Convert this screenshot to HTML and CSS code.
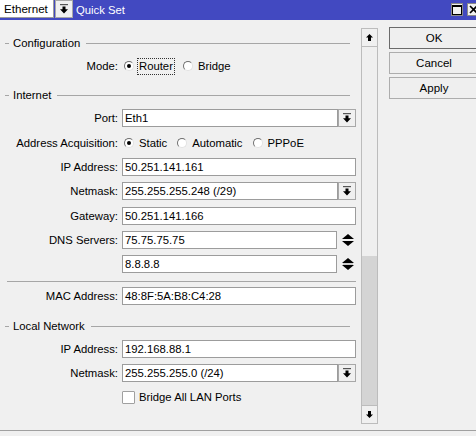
FILE: index.html
```html
<!DOCTYPE html>
<html lang="en">
<head>
    <meta charset="UTF-8">
    <title>Quick Set</title>
    <link rel="stylesheet" href="styles.css">
</head>
<body>
<div class="window">
    <div class="titlebar">
        <div class="iface">Ethernet</div>
        <div class="drop-btn title-drop">
            <svg width="8" height="10" viewBox="0 0 8 10"><rect x="0" y="0" width="8" height="1.2" fill="#555"/><path d="M2.5 2.5 H5.5 V5.2 H8 L4 9.5 L0 5.2 H2.5 Z" fill="#000"/></svg>
        </div>
        <div class="title">Quick Set</div>
        <div class="win-btn max">
            <svg width="10" height="10" viewBox="0 0 10 10"><rect x="0.5" y="0.5" width="9" height="9" fill="none" stroke="#000"/><rect x="0" y="0" width="10" height="2" fill="#000"/></svg>
        </div>
        <div class="win-btn close">
            <svg width="9" height="9" viewBox="0 0 9 9"><path d="M1 1 L8 8 M8 1 L1 8" stroke="#000" stroke-width="1.6"/></svg>
        </div>
    </div>

    <div class="main">
        <div class="form">
            <div class="group">
                <div class="group-head"><span>Configuration</span></div>
                <div class="row">
                    <div class="label">Mode:</div>
                    <div class="options">
                        <div class="option router"><span class="radio checked"></span><span class="focus">Router</span></div>
                        <div class="option"><span class="radio"></span><span>Bridge</span></div>
                    </div>
                </div>
            </div>

            <div class="group">
                <div class="group-head"><span>Internet</span></div>
                <div class="row">
                    <div class="label">Port:</div>
                    <div class="field short">Eth1</div>
                    <div class="drop-btn">
                        <svg width="8" height="10" viewBox="0 0 8 10"><rect x="0" y="0" width="8" height="1.2" fill="#555"/><path d="M2.5 2.5 H5.5 V5.2 H8 L4 9.5 L0 5.2 H2.5 Z" fill="#000"/></svg>
                    </div>
                </div>
                <div class="row tall">
                    <div class="label">Address Acquisition:</div>
                    <div class="options">
                        <div class="option"><span class="radio checked"></span><span>Static</span></div>
                        <div class="option"><span class="radio"></span><span>Automatic</span></div>
                        <div class="option"><span class="radio"></span><span>PPPoE</span></div>
                    </div>
                </div>
                <div class="row">
                    <div class="label">IP Address:</div>
                    <div class="field">50.251.141.161</div>
                </div>
                <div class="row">
                    <div class="label">Netmask:</div>
                    <div class="field short">255.255.255.248 (/29)</div>
                    <div class="drop-btn">
                        <svg width="8" height="10" viewBox="0 0 8 10"><rect x="0" y="0" width="8" height="1.2" fill="#555"/><path d="M2.5 2.5 H5.5 V5.2 H8 L4 9.5 L0 5.2 H2.5 Z" fill="#000"/></svg>
                    </div>
                </div>
                <div class="row tall">
                    <div class="label">Gateway:</div>
                    <div class="field">50.251.141.166</div>
                </div>
                <div class="row">
                    <div class="label">DNS Servers:</div>
                    <div class="field list">75.75.75.75</div>
                    <div class="spin">
                        <svg width="12" height="12" viewBox="0 0 12 12"><path d="M0 5 L6 0 L12 5 Z" fill="#000"/><path d="M0 7 L12 7 L6 12 Z" fill="#000"/></svg>
                    </div>
                </div>
                <div class="row low">
                    <div class="label"></div>
                    <div class="field list">8.8.8.8</div>
                    <div class="spin">
                        <svg width="12" height="12" viewBox="0 0 12 12"><path d="M0 5 L6 0 L12 5 Z" fill="#000"/><rect x="1" y="5.6" width="10" height="0.8" fill="#999"/><path d="M0 7 L12 7 L6 12 Z" fill="#000"/></svg>
                    </div>
                </div>
            </div>

            <div class="separator"></div>

            <div class="row mac">
                <div class="label">MAC Address:</div>
                <div class="field">48:8F:5A:B8:C4:28</div>
            </div>

            <div class="group local">
                <div class="group-head"><span>Local Network</span></div>
                <div class="row">
                    <div class="label">IP Address:</div>
                    <div class="field">192.168.88.1</div>
                </div>
                <div class="row">
                    <div class="label">Netmask:</div>
                    <div class="field short">255.255.255.0 (/24)</div>
                    <div class="drop-btn">
                        <svg width="8" height="10" viewBox="0 0 8 10"><rect x="0" y="0" width="8" height="1.2" fill="#555"/><path d="M2.5 2.5 H5.5 V5.2 H8 L4 9.5 L0 5.2 H2.5 Z" fill="#000"/></svg>
                    </div>
                </div>
                <div class="row">
                    <div class="label"></div>
                    <div class="check"><span class="box"></span><span>Bridge All LAN Ports</span></div>
                </div>
            </div>
        </div>

        <div class="scrollbar">
            <div class="sb-btn">
                <svg width="7" height="7" viewBox="0 0 7 7"><path d="M3.5 0 L7 3.6 H5 V7 H2 V3.6 H0 Z" fill="#000"/></svg>
            </div>
            <div class="sb-track"><div class="sb-thumb"></div></div>
            <div class="sb-btn down">
                <svg width="7" height="7" viewBox="0 0 7 7"><path d="M3.5 7 L7 3.4 H5 V0 H2 V3.4 H0 Z" fill="#000"/></svg>
            </div>
        </div>

        <div class="actions">
            <div class="button default">OK</div>
            <div class="button">Cancel</div>
            <div class="button">Apply</div>
        </div>
    </div>

    <div class="statusbar"></div>
</div>
</body>
</html>
```

FILE: styles.css
```css
/* WinBox style quick set window */
body {
    margin: 0;
    background: #f0f0f0;
    font-family: "Liberation Sans", Arial, sans-serif;
    font-size: 11.3px;
    color: #000;
}

.window {
    width: 476px;
    height: 436px;
    overflow: hidden;
    background: #f0f0f0;
}

.titlebar {
    height: 20px;
    background: #4249c1;
    display: flex;
    align-items: flex-start;
}

.iface {
    width: 54px;
    height: 18px;
    box-sizing: border-box;
    background: #fff;
    border-right: 1px solid #9c9c9c;
    border-bottom: 1px solid #9c9c9c;
    padding-left: 4px;
    line-height: 18px;
    font-size: 11.6px;
}

.title-drop {
    margin-left: 1px;
    width: 21px;
    height: 18px;
}

.title {
    color: #fff;
    margin-left: 3px;
    line-height: 20px;
    font-size: 11.3px;
}

.win-btn {
    width: 12px;
    height: 13px;
    margin-top: 3px;
    box-sizing: border-box;
    background: #f0f0f0;
    border: 1px solid #8a8a8a;
    display: flex;
    align-items: center;
    justify-content: center;
    flex-shrink: 0;
}

.win-btn.max {
    margin-left: auto;
}

.win-btn.close {
    margin-left: 4px;
    margin-right: -3px;
}

.main {
    height: 410px;
    display: flex;
    align-items: flex-start;
}

.form {
    width: 356px;
    padding: 12px 5px 0 0;
    flex-shrink: 0;
}

.group + .group {
    margin-top: 6px;
}

.group.local {
    margin-top: 7px;
}

.group-head {
    height: 22px;
    display: flex;
    align-items: center;
    padding-left: 5px;
    margin-right: 6px;
}

.group-head::before {
    content: "";
    width: 4px;
    border-top: 1px solid #a6a6a6;
    margin-right: 4px;
}

.group-head::after {
    content: "";
    flex: 1;
    border-top: 1px solid #a6a6a6;
    margin-left: 6px;
}

.row {
    height: 24px;
    display: flex;
    align-items: center;
}

.row.tall {
    height: 25px;
}

.row.low {
    height: 23px;
}

.label {
    width: 118px;
    margin-right: 4px;
    text-align: right;
    white-space: nowrap;
    flex-shrink: 0;
}

.field {
    width: 234px;
    height: 18px;
    box-sizing: border-box;
    background: #fff;
    border: 1px solid #9c9c9c;
    padding-left: 2px;
    line-height: 16px;
    white-space: nowrap;
}

.field.short {
    width: 216px;
}

.field.list {
    width: 215px;
}

.drop-btn {
    width: 18px;
    height: 18px;
    box-sizing: border-box;
    background: #f0f0f0;
    border: 1px solid #a8a8a8;
    display: flex;
    align-items: center;
    justify-content: center;
    flex-shrink: 0;
}

.spin {
    margin-left: 5px;
    display: flex;
}

.options {
    display: flex;
    align-items: center;
    padding-left: 2px;
}

.option {
    display: flex;
    align-items: center;
    margin-right: 10px;
}

.option.router {
    margin-right: 8px;
}

.radio {
    width: 10px;
    height: 10px;
    box-sizing: border-box;
    border-radius: 50%;
    background: #fff;
    border: 1px solid;
    border-color: #6e6e6e #e2e2e2 #e2e2e2 #6e6e6e;
    margin-right: 5px;
    position: relative;
}

.radio.checked::after {
    content: "";
    position: absolute;
    left: 2px;
    top: 2px;
    width: 4px;
    height: 4px;
    border-radius: 50%;
    background: #000;
}

.router .radio {
    margin-right: 3px;
}

.focus {
    border: 1px dotted #333;
    padding: 0 1px;
    line-height: 15px;
}

.separator {
    margin: 6px 0 2px 7px;
    border-top: 1px solid #a6a6a6;
}

.check {
    display: flex;
    align-items: center;
}

.check .box {
    width: 13px;
    height: 13px;
    box-sizing: border-box;
    background: #fff;
    border: 1px solid #a0a0a0;
    border-radius: 1px;
    margin-right: 4px;
}

.scrollbar {
    width: 17px;
    height: 396px;
    margin-top: 8px;
    box-sizing: border-box;
    border: 1px solid #bcbcbc;
    display: flex;
    flex-direction: column;
    flex-shrink: 0;
}

.sb-btn {
    height: 17px;
    background: #f0f0f0;
    border-bottom: 1px solid #bcbcbc;
    display: flex;
    align-items: center;
    justify-content: center;
}

.sb-btn.down {
    border-bottom: none;
    border-top: 1px solid #bcbcbc;
}

.sb-track {
    flex: 1;
    background: #efefef;
    display: flex;
    flex-direction: column;
}

.sb-thumb {
    margin-top: auto;
    height: 149px;
    background: #d4d4d4;
}

.actions {
    margin-left: 11px;
    margin-top: 7px;
    display: flex;
    flex-direction: column;
    gap: 3px;
    flex-shrink: 0;
}

.button {
    width: 90px;
    height: 22px;
    box-sizing: border-box;
    background: #efefef;
    border: 1px solid #adadad;
    text-align: center;
    line-height: 20px;
    font-size: 11.5px;
}

.button.default {
    border-color: #6b6b6b;
}

.statusbar {
    height: 6px;
    border-top: 1px solid #a0a0a0;
}
```
